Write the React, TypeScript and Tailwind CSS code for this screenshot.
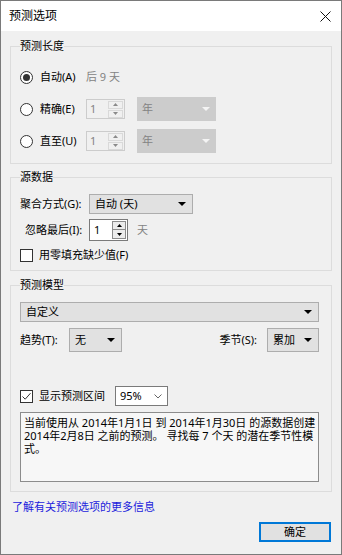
import React from 'react';

const Tri = ({ color = '#000', up = false, w = 8, h = 4 }: { color?: string; up?: boolean; w?: number; h?: number }) => (
  <svg width={w} height={h} viewBox={`0 0 ${w} ${h}`} className="block">
    <polygon points={up ? `0,${h} ${w},${h} ${w / 2},0` : `0,0 ${w},0 ${w / 2},${h}`} fill={color} />
  </svg>
);

function Radio({ checked }: { checked?: boolean }) {
  return (
    <span className="w-[13px] h-[13px] rounded-full border border-[#333333] bg-white flex items-center justify-center shrink-0">
      {checked && <span className="w-[7px] h-[7px] rounded-full bg-[#333333]" />}
    </span>
  );
}

function Check({ checked }: { checked?: boolean }) {
  return (
    <span className="w-[13px] h-[13px] border border-[#333333] bg-white flex items-center justify-center shrink-0">
      {checked && (
        <svg width="11" height="11" viewBox="0 0 11 11">
          <path d="M1.5 5.5 L4.2 8.2 L9.5 2.2" stroke="#333" strokeWidth="1" fill="none" />
        </svg>
      )}
    </span>
  );
}

function DisabledSpin() {
  return (
    <div className="w-[39px] h-[20px] border border-[#cccccc] flex items-center">
      <span className="flex-1 pl-[3px] text-[#838383]">1</span>
      <div className="w-[15px] flex flex-col gap-px mr-[1px]">
        <span className="h-[8px] border border-[#d9d9d9] flex items-center justify-center"><Tri up color="#8a8a8a" w={5} h={3} /></span>
        <span className="h-[8px] border border-[#d9d9d9] flex items-center justify-center"><Tri color="#8a8a8a" w={5} h={3} /></span>
      </div>
    </div>
  );
}

function DisabledCombo() {
  return (
    <div className="w-[79px] h-[24px] bg-[#cccccc] flex items-center justify-between pl-[5px] pr-[6px] text-[#838383]">
      <span>年</span>
      <Tri color="#f4f4f4" w={8} h={4} />
    </div>
  );
}

function Combo({ text, w }: { text: string; w: string }) {
  return (
    <div className={`${w} h-full bg-[#e1e1e1] border border-[#adadad] flex items-center justify-between pl-[5px] pr-[6px]`}>
      <span>{text}</span>
      <Tri w={8} h={4} />
    </div>
  );
}

export default function App() {
  return (
    <div className="w-[342px] h-[555px] border border-[#7a7a7a] bg-[#f0f0f0] flex flex-col text-[11px] leading-[16px] text-black font-['Noto_Sans','Noto_Sans_CJK_SC',sans-serif]">
      {/* title bar */}
      <div className="h-[30px] bg-white flex items-center justify-between pl-[8px] pr-[10px] shrink-0">
        <span className="text-[12px]">预测选项</span>
        <svg width="11" height="11" viewBox="0 0 11 11">
          <path d="M0.5 0.5 L10.5 10.5 M10.5 0.5 L0.5 10.5" stroke="#111" strokeWidth="1" />
        </svg>
      </div>

      <div className="flex flex-col px-[9px]">
        {/* 预测长度 */}
        <fieldset className="min-w-0 mt-[7px] border border-[#dcdcdc] pl-[9px] pt-[11px] pb-[10px] flex flex-col gap-[8px]">
          <legend className="h-[16px]">预测长度</legend>
          <div className="h-[24px] flex items-center">
            <Radio checked />
            <span className="ml-[7px] w-[46px]">自动(A)</span>
            <span className="text-[#838383]">后 9 天</span>
          </div>
          <div className="h-[24px] flex items-center">
            <Radio />
            <span className="ml-[7px] w-[46px]">精确(E)</span>
            <DisabledSpin />
            <span className="ml-[12px]"><DisabledCombo /></span>
          </div>
          <div className="h-[24px] flex items-center">
            <Radio />
            <span className="ml-[7px] w-[46px]">直至(U)</span>
            <DisabledSpin />
            <span className="ml-[12px]"><DisabledCombo /></span>
          </div>
        </fieldset>

        {/* 源数据 */}
        <fieldset className="min-w-0 mt-[5px] border border-[#dcdcdc] pl-[9px] pt-[9px] pb-[8px] flex flex-col">
          <legend className="h-[16px]">源数据</legend>
          <div className="h-[20px] flex items-center">
            <span className="w-[69px]">聚合方式(G):</span>
            <Combo text="自动 (天)" w="w-[104px]" />
          </div>
          <div className="h-[22px] mt-[5px] flex items-center">
            <span className="w-[64px] ml-[5px]">忽略最后(I):</span>
            <div className="w-[39px] h-full border border-[#7a7a7a] bg-white flex items-center">
              <span className="flex-1 pl-[4px]">1</span>
              <div className="w-[14px] flex flex-col mr-[1px]">
                <span className="h-[9px] border border-[#8c8c8c] bg-[#ececec] flex items-center justify-center"><Tri up w={5} h={3} /></span>
                <span className="h-[9px] border border-t-0 border-[#8c8c8c] bg-[#ececec] flex items-center justify-center"><Tri w={5} h={3} /></span>
              </div>
            </div>
            <span className="ml-[9px] text-[#838383]">天</span>
          </div>
          <div className="h-[14px] mt-[7px] flex items-center">
            <Check />
            <span className="ml-[6px]">用零填充缺少值(F)</span>
          </div>
        </fieldset>

        {/* 预测模型 */}
        <fieldset className="min-w-0 mt-[6px] border border-[#dcdcdc] pl-[9px] pr-[12px] pt-[9px] pb-[9px] flex flex-col">
          <legend className="h-[16px]">预测模型</legend>
          <div className="h-[20px] flex">
            <Combo text="自定义" w="w-full" />
          </div>
          <div className="h-[24px] mt-[6px] flex items-center">
            <span className="w-[49px]">趋势(T):</span>
            <Combo text="无" w="w-[53px]" />
            <span className="flex-1 text-right pr-[10px]">季节(S):</span>
            <Combo text="累加" w="w-[52px]" />
          </div>
          <div className="h-[20px] mt-[34px] flex items-center">
            <Check checked />
            <span className="ml-[6px] w-[76px]">显示预测区间</span>
            <div className="w-[53px] h-full bg-white border border-[#7a7a7a] flex items-center justify-between pl-[4px] pr-[5px]">
              <span>95%</span>
              <svg width="8" height="5" viewBox="0 0 8 5">
                <path d="M0.5 0.5 L4 4 L7.5 0.5" stroke="#666" strokeWidth="1" fill="none" />
              </svg>
            </div>
          </div>
          <div className="h-[70px] mt-[6px] border border-[#8c8c8c] bg-[#f7f7f7] px-[3px] pt-[3px] leading-[13px] whitespace-nowrap overflow-hidden">
            <div>当前使用从 2014年1月1日 到 2014年1月30日 的源数据创建</div>
            <div>2014年2月8日 之前的预测。 寻找每 7 个天 的潜在季节性模</div>
            <div>式。</div>
          </div>
        </fieldset>

        <a className="mt-[7px] ml-[2px] text-[#1c1cdd] self-start cursor-pointer">了解有关预测选项的更多信息</a>

        <div className="mt-[7px] flex justify-end mr-[1px]">
          <button className="w-[72px] h-[20px] border-2 border-[#0078d7] bg-[#e1e1e1] flex items-center justify-center">确定</button>
        </div>
      </div>
    </div>
  );
}
